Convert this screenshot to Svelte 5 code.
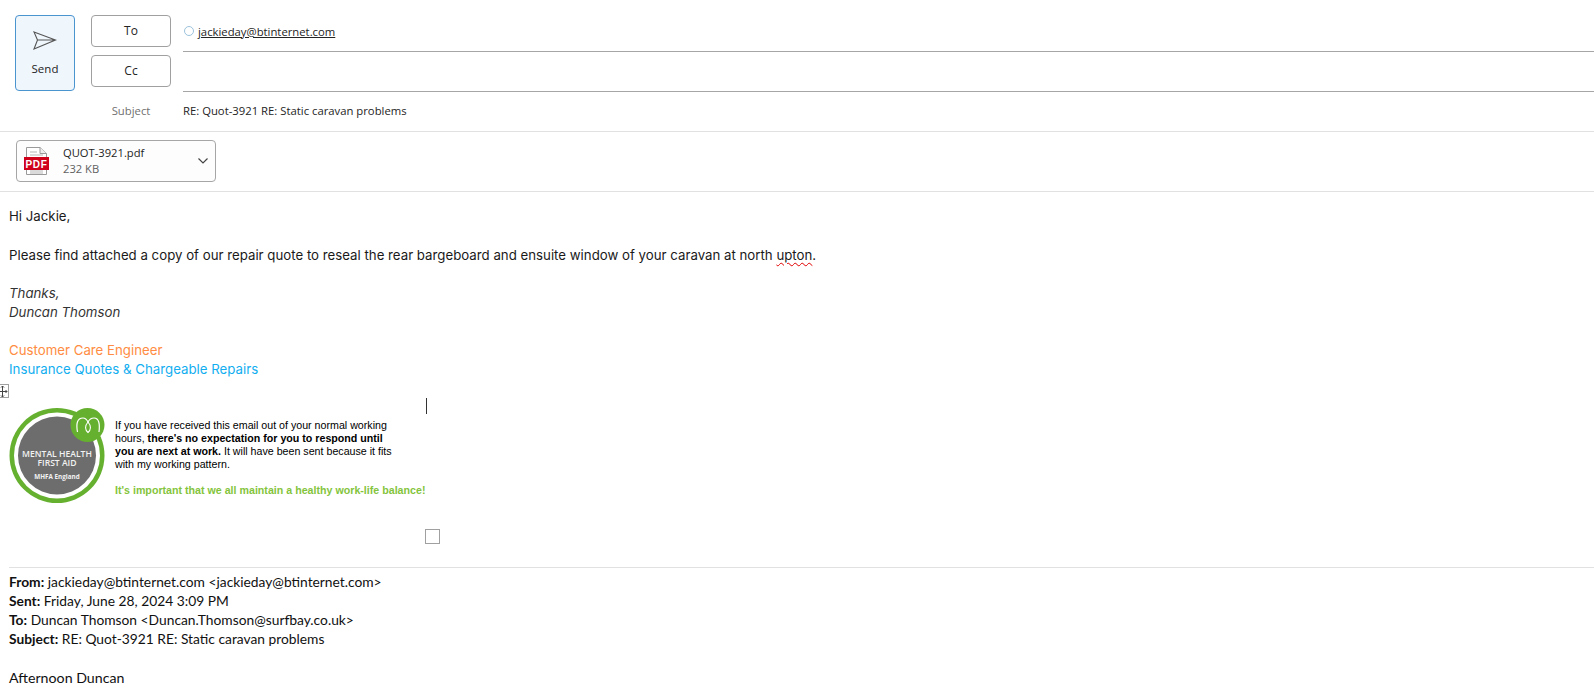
<script>
  const headers = [
    ['From:', 'jackieday@btinternet.com <jackieday@btinternet.com>'],
    ['Sent:', 'Friday, June 28, 2024 3:09 PM'],
    ['To:', 'Duncan Thomson <Duncan.Thomson@surfbay.co.uk>'],
    ['Subject:', 'RE: Quot-3921 RE: Static caravan problems']
  ];
</script>

<div class="page">
  <header class="compose">
    <button class="send">
      <svg width="24" height="24" viewBox="0 0 24 24" fill="none" stroke="#555" stroke-width="1.1" stroke-linejoin="miter">
        <path d="M1 3 L22.500 11 L1 20 L4.500 11 Z M4.500 11 H22.500" />
      </svg>
      <span>Send</span>
    </button>
    <div class="fields">
      <div class="field tall">
        <button class="addr">To</button>
        <div class="value lined"><i class="dot"></i><u>jackieday@btinternet.com</u></div>
      </div>
      <div class="field tall">
        <button class="addr">Cc</button>
        <div class="value lined"></div>
      </div>
      <div class="field subject">
        <span class="label">Subject</span>
        <div class="value">RE: Quot-3921 RE: Static caravan problems</div>
      </div>
    </div>
  </header>

  <section class="attachments">
    <div class="file">
      <svg class="pdf" width="26" height="30" viewBox="0 0 26 30">
        <path d="M2.500 1.500 H16 L22.500 7.500 V28.500 H2.500 Z" fill="#fff" stroke="#9a9a9a" />
        <path d="M16 1.500 V7.500 H22.500" fill="#eee" stroke="#9a9a9a" />
        <path d="M6 6H13M6 9H19M6 25H19M6 27H19" stroke="#b5b5b5" />
        <rect x="0" y="11" width="25" height="13" fill="#d0021b" />
        <text x="12.500" y="21.500" class="pdftext" text-anchor="middle">PDF</text>
      </svg>
      <div class="fileinfo">
        <div class="fname">QUOT-3921.pdf</div>
        <div class="fsize">232 KB</div>
      </div>
      <svg class="chev" width="12" height="8" viewBox="0 0 12 8" fill="none" stroke="#444" stroke-width="1.200">
        <path d="M1.500 1.500 L6 6 L10.500 1.500" />
      </svg>
    </div>
  </section>

  <main class="body">
    <p>Hi Jackie,</p>
    <p class="first">Please find attached a copy of our repair quote to reseal the rear bargeboard and ensuite window of your caravan at north <span class="spell">upton</span>.</p>
    <p class="gap sig">Thanks,</p>
    <p class="sig">Duncan Thomson</p>
    <p class="gap orange">Customer Care Engineer</p>
    <p class="blue">Insurance Quotes &amp; Chargeable Repairs</p>

    <div class="table">
      <span class="handle">
        <svg width="9" height="13" viewBox="0 0 9 13" fill="none" stroke="#444" stroke-width="1">
          <path d="M3.500 1V12M0 6.500H8M2 2.500L3.500 1L5 2.500M2 10.500L3.500 12L5 10.500M6.500 5L8 6.500L6.500 8" />
        </svg>
      </span>
      <span class="caret"></span>
      <div class="row">
        <svg class="badge" width="96" height="96" viewBox="0 0 96 96">
          <circle cx="48" cy="47.500" r="47.500" fill="#66b02f" />
          <circle cx="48" cy="47.500" r="43" fill="#fff" />
          <circle cx="48" cy="47.500" r="39" fill="#6d6d6d" />
          <circle cx="78.500" cy="17" r="17" fill="#66b02f" />
          <path d="M68.500 24 C67 16 68 10 74 10 C77 10 78 12 79 14 C80 12 82 10 85 10 C90 10 91 16 90 24" fill="none" stroke="#fff" stroke-width="1.200" />
          <path d="M79 14 C75.500 18 76 22 79 24.500 C82 22 82.500 18 79 14 Z" fill="none" stroke="#fff" stroke-width="1.100" />
          <text x="48" y="49" class="b1" text-anchor="middle">MENTAL HEALTH</text>
          <text x="48" y="58" class="b1" text-anchor="middle">FIRST AID</text>
          <text x="48" y="71" class="b2" text-anchor="middle">MHFA England</text>
        </svg>
        <div class="note">
          <div>If you have received this email out of your normal working</div>
          <div>hours, <b>there's no expectation for you to respond until</b></div>
          <div><b>you are next at work.</b> It will have been sent because it fits</div>
          <div>with my working pattern.</div>
          <div class="green">It's important that we all maintain a healthy work-life balance!</div>
        </div>
      </div>
      <span class="cell"></span>
    </div>

    <hr />

    <div class="orig">
      {#each headers as [k, v]}
        <div><b>{k}</b> {v}</div>
      {/each}
      <div class="after">Afternoon Duncan</div>
    </div>
  </main>
</div>

<style>
  :global(body) {
    margin: 0;
    background: #fff;
    overflow: hidden;
  }
  .page {
    height: 690px;
    overflow: hidden;
    font-family: "Open Sans", "Noto Sans", sans-serif;
    color: #242424;
  }
  button {
    font: inherit;
    color: #242424;
    background: #fff;
    padding: 0;
    cursor: default;
  }
  .compose {
    display: flex;
    padding: 15px 0 0 15px;
    height: 116px;
    border-bottom: 1px solid #e1e1e1;
  }
  .send {
    width: 60px;
    height: 76px;
    margin-right: 16px;
    flex: none;
    box-sizing: border-box;
    background: #eff6fc;
    border: 1px solid #4a94d0;
    border-radius: 4px;
    display: flex;
    flex-direction: column;
    align-items: center;
    font-size: 11.500px;
  }
  .send svg {
    margin-top: 13px;
  }
  .send span {
    margin-top: 8px;
    line-height: 16px;
  }
  .fields {
    flex: 1;
    min-width: 0;
  }
  .field {
    display: flex;
  }
  .tall {
    height: 40px;
  }
  .addr {
    width: 80px;
    height: 32px;
    box-sizing: border-box;
    border: 1px solid #a0a0a0;
    border-radius: 4px;
    font-size: 12px;
    padding-bottom: 2px;
    flex: none;
    margin-right: 12px;
  }
  .value {
    flex: 1;
    font-size: 11.300px;
    display: flex;
    align-items: center;
    height: 20px;
  }
  .lined {
    box-sizing: border-box;
    height: 37px;
    padding: 0 0 4px 1px;
    border-bottom: 1px solid #a6a6a6;
  }
  .dot {
    width: 8px;
    height: 8px;
    border: 1px solid #9cc3dc;
    border-radius: 50%;
    margin-right: 4px;
  }
  .subject {
    height: 36px;
    align-items: flex-start;
    padding-top: 6px;
  }
  .subject .value {
    height: 20px;
    line-height: 20px;
  }
  .label {
    width: 80px;
    margin-right: 12px;
    text-align: center;
    color: #707070;
    font-size: 11.300px;
    line-height: 20px;
    flex: none;
  }
  .attachments {
    height: 60px;
    box-sizing: border-box;
    padding: 8px 0 0 16px;
    border-bottom: 1px solid #e1e1e1;
  }
  .file {
    width: 200px;
    height: 42px;
    box-sizing: border-box;
    border: 1px solid #a6a6a6;
    border-radius: 4px;
    background: #fdfdfd;
    display: flex;
    align-items: center;
    padding: 0 6px 0 7px;
  }
  .pdf {
    flex: none;
    margin-right: 12px;
  }
  .pdftext {
    font: 700 10px "Liberation Sans", sans-serif;
    fill: #fff;
    letter-spacing: .6px;
  }
  .fileinfo {
    flex: 1;
    font-size: 11.200px;
    line-height: 16px;
    margin-left: 1px;
  }
  .fsize {
    color: #616161;
  }
  .chev {
    flex: none;
  }
  .body {
    padding: 15px 0 0 9px;
    font-family: Inter, "Noto Sans", sans-serif;
    font-size: 13.250px;
    line-height: 19px;
    color: #1a1a1a;
  }
  p {
    margin: 0;
  }
  .first {
    margin-top: 20px;
  }
  .gap {
    margin-top: 19px;
  }
  .sig {
    font-style: italic;
    color: #333;
  }
  .orange {
    color: #ff8c42;
  }
  .blue {
    color: #12aef0;
  }
  .spell {
    text-decoration: underline wavy #e00000 1px;
    text-underline-offset: 2px;
  }
  .table {
    position: relative;
    height: 188px;
    margin-left: -9px;
    padding: 29px 0 0 9px;
    box-sizing: border-box;
  }
  .handle {
    position: absolute;
    left: 0;
    top: 5px;
    width: 8px;
    height: 12px;
    border: 1px solid #a0a0a0;
    border-left: 0;
    overflow: hidden;
    background: #fff;
  }
  .handle svg {
    display: block;
    margin-left: -1px;
  }
  .caret {
    position: absolute;
    left: 426px;
    top: 19px;
    width: 1px;
    height: 16px;
    background: #333;
  }
  .cell {
    position: absolute;
    left: 425px;
    top: 150px;
    width: 15px;
    height: 15px;
    box-sizing: border-box;
    border: 1px solid #a0a0a0;
    background: #fff;
  }
  .row {
    display: flex;
    align-items: flex-start;
  }
  .badge {
    flex: none;
    margin-right: 10px;
  }
  .b1 {
    font: 600 8.600px "Open Sans", sans-serif;
    fill: #f2f2f2;
  }
  .b2 {
    font: 700 6.300px "Open Sans", sans-serif;
    fill: #f2f2f2;
  }
  .note {
    font-family: "Liberation Sans", Arial, sans-serif;
    font-size: 10.670px;
    line-height: 13px;
    color: #000;
    padding-top: 11px;
    white-space: nowrap;
  }
  .green {
    margin-top: 13px;
    font-weight: 700;
    color: #84c43c;
  }
  hr {
    border: 0;
    border-top: 1px solid #e1e1e1;
    margin: 0;
  }
  .orig {
    padding-top: 4px;
    font-family: Lato, "Noto Sans", sans-serif;
    font-size: 13.800px;
    line-height: 19px;
    color: #111;
  }
  .orig b {
    font-weight: 700;
  }
  .after {
    margin-top: 20px;
    font-size: 14.200px;
  }
</style>
